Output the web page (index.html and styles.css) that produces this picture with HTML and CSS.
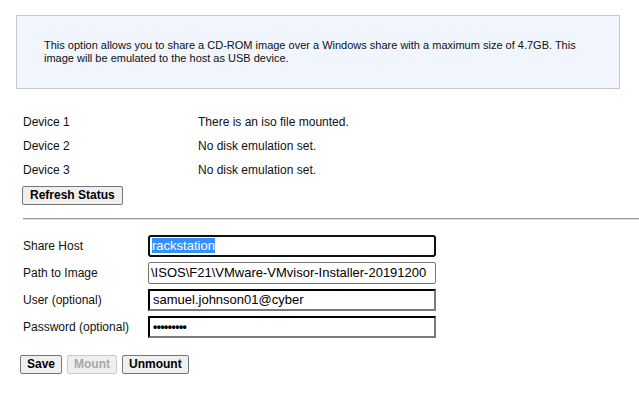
FILE: index.html
```html
<!DOCTYPE html>
<html>
<head>
<meta charset="utf-8">
<link rel="stylesheet" href="styles.css">
</head>
<body>
<div class="page">
  <div class="info">
    <p class="info-text">This option allows you to share a CD-ROM image over a Windows share with a maximum size of 4.7GB. This image will be emulated to the host as USB device.</p>
  </div>
  <div class="status">
    <div class="status-row"><span class="lbl">Device 1</span><span>There is an iso file mounted.</span></div>
    <div class="status-row"><span class="lbl">Device 2</span><span>No disk emulation set.</span></div>
    <div class="status-row"><span class="lbl">Device 3</span><span>No disk emulation set.</span></div>
    <button class="btn refresh">Refresh Status</button>
  </div>
  <hr class="sep">
  <div class="form">
    <div class="form-row"><label class="flabel">Share Host</label><div class="field focused"><span class="sel">rackstation</span></div></div>
    <div class="form-row"><label class="flabel">Path to Image</label><div class="field thin">\ISOS\F21\VMware-VMvisor-Installer-20191200</div></div>
    <div class="form-row"><label class="flabel">User (optional)</label><div class="field inset">samuel.johnson01@cyber</div></div>
    <div class="form-row"><label class="flabel">Password (optional)</label><div class="field inset dots">•••••••••</div></div>
  </div>
  <div class="actions">
    <button class="btn">Save</button>
    <button class="btn disabled">Mount</button>
    <button class="btn">Unmount</button>
  </div>
</div>
</body>
</html>
```
FILE: styles.css
```css
html, body {
  margin: 0;
  padding: 0;
  background: #fff;
}
body {
  font-family: "Liberation Sans", Arial, sans-serif;
  color: #111;
}
.page {
  padding: 15px 0 0 0;
}
.info {
  margin-left: 16px;
  width: 602px;
  height: 72px;
  border: 1px solid #c8c8c8;
  background: #f0f5fe;
  display: flex;
  align-items: center;
}
.info-text {
  margin: 0 0 0 27px;
  width: 550px;
  font-size: 11px;
  line-height: 13px;
  color: #111;
}
.status {
  margin: 21px 0 0 23px;
  font-size: 12px;
}
.status-row {
  display: grid;
  grid-template-columns: 175px auto;
  height: 24px;
  align-items: center;
}
.btn {
  font-family: "Liberation Sans", Arial, sans-serif;
  font-size: 12px;
  font-weight: bold;
  color: #000;
  background: #efefef;
  border: 1px solid #767676;
  border-radius: 2px;
  padding: 0 6px;
  height: 19px;
  line-height: 17px;
}
.refresh {
  margin: 4px 0 0 -1px;
  padding: 0 7px;
}
.btn.disabled {
  color: #a8a8a8;
  border-color: #c8c8c8;
  background: #efefef;
}
.sep {
  margin: 13px 0 0 23px;
  border: 0;
  border-top: 1px solid #999;
  border-bottom: 1px solid #ddd;
  height: 0;
}
.form {
  margin: 15px 0 0 23px;
  font-size: 12px;
  display: flex;
  flex-direction: column;
  gap: 5px;
}
.form-row {
  display: grid;
  grid-template-columns: 125px 288px;
  align-items: center;
  height: 22px;
}
.field {
  box-sizing: border-box;
  height: 22px;
  font-size: 13px;
  line-height: 18px;
  white-space: nowrap;
  overflow: hidden;
  color: #000;
  padding: 0 3px;
  background: #fff;
}
.field.focused {
  border: 2px solid #101010;
  border-radius: 3px;
  padding: 0 2px;
}
.sel {
  background: #3390ff;
  color: #fff;
}
.field.thin {
  border: 1px solid #767676;
  border-radius: 2px;
  line-height: 20px;
  padding: 0 2px;
}
.field.inset {
  border: 2px inset #767676;
  border-top-color: #2e2e2e;
  border-left-color: #2e2e2e;
  border-right-color: #7a7a7a;
  border-bottom-color: #7a7a7a;
}
.field.dots {
  font-size: 12px;
  font-weight: bold;
  letter-spacing: -0.5px;
}
.actions {
  margin: 17px 0 0 20px;
  display: flex;
  gap: 5px;
}
```
